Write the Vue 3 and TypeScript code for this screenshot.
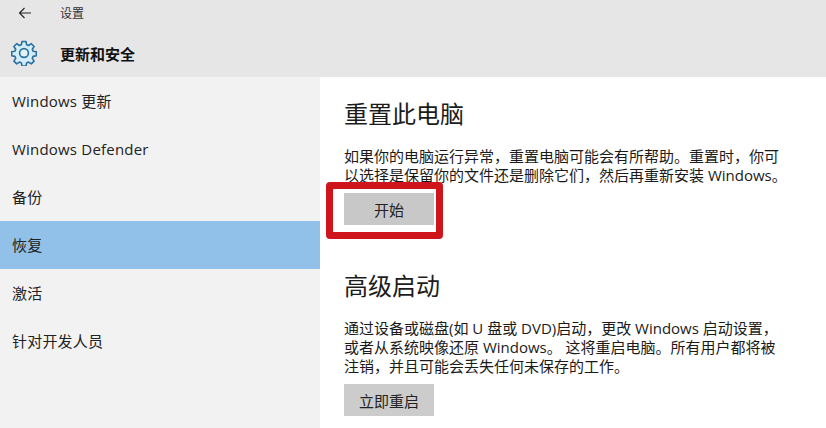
<script setup lang="ts">
const navItems: { label: string; active?: boolean }[] = [
  { label: 'Windows 更新' },
  { label: 'Windows Defender' },
  { label: '备份' },
  { label: '恢复', active: true },
  { label: '激活' },
  { label: '针对开发人员' },
]
</script>

<template>
  <div class="app">
    <header class="header">
      <div class="topbar">
        <svg class="back" viewBox="0 0 14 12" width="14" height="12">
          <path d="M13 6H1.5M6.5 1L1.5 6l5 5" fill="none" stroke="#222" stroke-width="1.1" />
        </svg>
        <span class="crumb">设置</span>
      </div>
      <div class="section">
        <svg class="gear" viewBox="0 0 26 26" width="26" height="26">
          <path
            d="M11 1.5h4l.6 3.2 2 .8 2.7-1.8 2.8 2.8-1.8 2.7.8 2 3.2.6v4l-3.2.6-.8 2 1.8 2.7-2.8 2.8-2.7-1.8-2 .8-.6 3.2h-4l-.6-3.2-2-.8-2.7 1.8-2.8-2.8 1.8-2.7-.8-2-3.2-.6v-4l3.2-.6.8-2L2.9 6.5l2.8-2.8 2.7 1.8 2-.8z"
            fill="#d3eefa"
            stroke="#2a6f9e"
            stroke-width="1.6"
            stroke-linejoin="round"
          />
          <circle cx="13" cy="13" r="4.4" fill="#e4f2f8" stroke="#2a6f9e" stroke-width="1.6" />
        </svg>
        <span class="section-title">更新和安全</span>
      </div>
    </header>
    <div class="body">
      <nav class="sidebar">
        <div v-for="item in navItems" :key="item.label" class="nav-item" :class="{ active: item.active }">
          {{ item.label }}
        </div>
      </nav>
      <main class="content">
        <h2 class="title first">重置此电脑</h2>
        <p class="desc">如果你的电脑运行异常，重置电脑可能会有所帮助。重置时，你可<br />以选择是保留你的文件还是删除它们，然后再重新安装 Windows。</p>
        <div class="btn-wrap">
          <button class="btn">开始</button>
          <span class="highlight"></span>
        </div>
        <h2 class="title second">高级启动</h2>
        <p class="desc">通过设备或磁盘(如 U 盘或 DVD)启动，更改 Windows 启动设置，<br />或者从系统映像还原 Windows。 这将重启电脑。所有用户都将被<br />注销，并且可能会丢失任何未保存的工作。</p>
        <button class="btn restart">立即重启</button>
      </main>
    </div>
  </div>
</template>

<style>
html, body { margin: 0; padding: 0; background: #fff; overflow: hidden; }
</style>

<style scoped>
.app {
  width: 826px;
  height: 428px;
  display: flex;
  flex-direction: column;
  overflow: hidden;
  font-family: "Open Sans", "Noto Sans CJK SC", sans-serif;
  color: #1a1a1a;
}
.header { height: 77px; background: #e6e6e6; flex: none; }
.topbar { height: 26px; display: flex; align-items: center; padding-left: 18px; }
.back { flex: none; }
.crumb { margin-left: 28px; font-size: 12px; color: #333; }
.section { display: flex; align-items: center; height: 30px; margin-top: 12px; padding-left: 11px; }
.gear { flex: none; }
.section-title { margin-left: 23px; font-size: 15px; font-weight: 700; color: #111; }
.body { flex: 1; display: flex; min-height: 0; }
.sidebar { width: 320px; flex: none; background: #f2f2f2; }
.nav-item { height: 48px; line-height: 48px; padding-left: 12px; font-size: 15px; letter-spacing: 0.2px; color: #222; }
.nav-item.active { background: #91c1e8; }
.content { flex: 1; padding: 0 0 0 24px; background: #fff; min-width: 0; }
.title { margin: 0; font-size: 24px; font-weight: 400; line-height: 32px; color: #1c1c1c; }
.first { margin-top: 21px; }
.second { margin-top: 45px; }
.desc { margin: 17px 0 0; font-size: 15px; line-height: 19px; color: #1a1a1a; white-space: nowrap; }
.btn-wrap { position: relative; width: 90px; margin-top: 8px; }
.btn {
  display: block;
  width: 90px;
  height: 32px;
  border: 0;
  padding: 0;
  background: #c8c8c8;
  font: inherit;
  font-size: 15px;
  color: #222;
}
.highlight {
  position: absolute;
  left: -18px;
  top: -11px;
  width: 103px;
  height: 43px;
  border: 7px solid #d0141c;
  border-radius: 4px;
}
.restart { margin-top: 8px; background: #cccccc; }
</style>
